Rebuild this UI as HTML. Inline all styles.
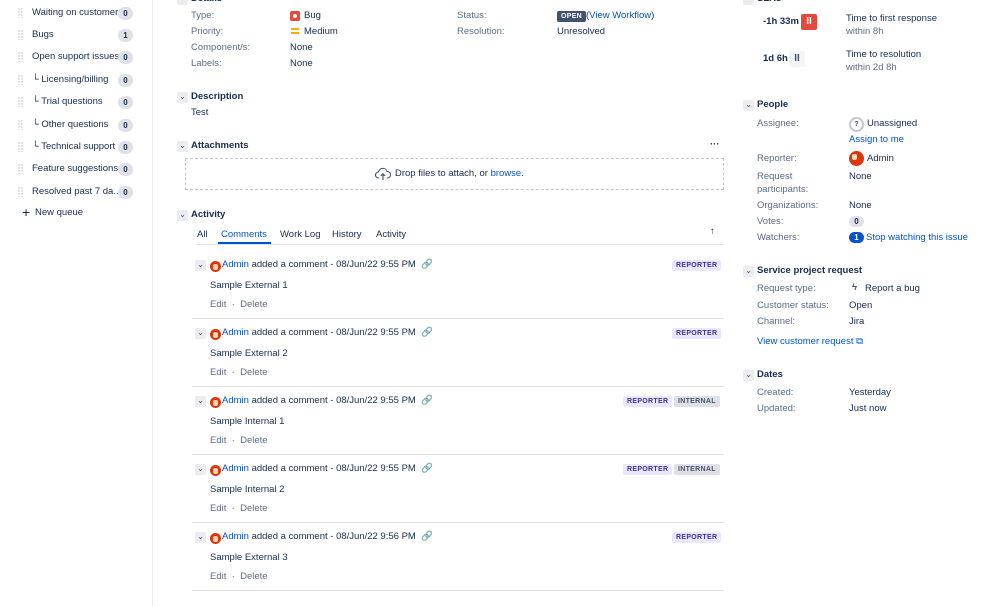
<!DOCTYPE html><html><head><style>
*{margin:0;padding:0;box-sizing:border-box}
body{width:999px;height:604px;background:#fff;font-family:"Liberation Sans",sans-serif;font-size:9.5px;color:#172b4d;position:relative;overflow:hidden}
#w{position:absolute;left:0;top:1px;width:999px;height:604px}
.a{position:absolute;white-space:nowrap;line-height:14px}
.l{color:#5e6c84}
.b{font-weight:bold}
.lk{color:#0052cc}
.badge{position:absolute;background:#dfe1e6;border-radius:7px;font-size:8px;font-weight:bold;width:15px;height:13px;text-align:center;line-height:13px;color:#172b4d}
.dr{position:absolute;left:18px;width:5px;height:10px}
.chev{position:absolute;width:11px;height:11px;background:#ebecf0;border-radius:2px;font-size:8px;text-align:center;line-height:10px;color:#42526e}
.lz{position:absolute;font-size:7px;font-weight:bold;padding:0 4px;height:11px;line-height:11px;border-radius:2px;letter-spacing:.3px}
.rep{background:#eae6ff;color:#403294}
.int{background:#dfe1e6;color:#42526e}
.av{position:absolute;width:11px;height:11px;border-radius:50%;background:#de350b;overflow:hidden}
.av:after{content:"";position:absolute;left:3px;top:3px;width:5px;height:6px;background:#ffd7b5;border-radius:2px}
.sep{position:absolute;left:192px;width:532px;height:1px;background:#dfe1e6}
</style></head><body><div id="w">
<svg width="0" height="0" style="position:absolute"><defs><pattern id="dp" width="3" height="3" patternUnits="userSpaceOnUse"><circle cx="1" cy="1" r="0.7" fill="#b3bac5"/></pattern></defs></svg>
<div style="position:absolute;left:152px;top:-1px;width:1px;height:606px;background:#ebecf0"></div>

<svg class="dr" style="top:7px"><rect width="5" height="10" fill="url(#dp)"/></svg><div class="a" style="left:32px;top:5px">Waiting on customer</div><div class="badge" style="left:118px;top:6px">0</div>
<svg class="dr" style="top:29px"><rect width="5" height="10" fill="url(#dp)"/></svg><div class="a" style="left:32px;top:27px">Bugs</div><div class="badge" style="left:118px;top:28px">1</div>
<svg class="dr" style="top:51px"><rect width="5" height="10" fill="url(#dp)"/></svg><div class="a" style="left:32px;top:49px">Open support issues</div><div class="badge" style="left:118px;top:50px">0</div>
<svg class="dr" style="top:74px"><rect width="5" height="10" fill="url(#dp)"/></svg><div class="a" style="left:32px;top:72px">└ Licensing/billing</div><div class="badge" style="left:118px;top:73px">0</div>
<svg class="dr" style="top:96px"><rect width="5" height="10" fill="url(#dp)"/></svg><div class="a" style="left:32px;top:94px">└ Trial questions</div><div class="badge" style="left:118px;top:95px">0</div>
<svg class="dr" style="top:119px"><rect width="5" height="10" fill="url(#dp)"/></svg><div class="a" style="left:32px;top:117px">└ Other questions</div><div class="badge" style="left:118px;top:118px">0</div>
<svg class="dr" style="top:141px"><rect width="5" height="10" fill="url(#dp)"/></svg><div class="a" style="left:32px;top:139px">└ Technical support</div><div class="badge" style="left:118px;top:140px">0</div>
<svg class="dr" style="top:163px"><rect width="5" height="10" fill="url(#dp)"/></svg><div class="a" style="left:32px;top:161px">Feature suggestions</div><div class="badge" style="left:118px;top:162px">0</div>
<svg class="dr" style="top:186px"><rect width="5" height="10" fill="url(#dp)"/></svg><div class="a" style="left:32px;top:184px">Resolved past 7 da...</div><div class="badge" style="left:118px;top:185px">0</div>
<div class="a" style="left:22px;top:204px;font-size:14px">+</div><div class="a" style="left:35px;top:205px">New queue</div>

<!-- details -->
<div class="chev" style="left:177px;top:-7px"></div><div class="a b" style="left:191px;top:-9px">Details</div>
<div class="a l" style="left:191px;top:8px">Type:</div><div style="position:absolute;left:290px;top:10px;width:10px;height:10px;background:#e5493a;border-radius:2px"><div style="position:absolute;left:3px;top:3px;width:4px;height:4px;background:#fff;border-radius:50%"></div></div><div class="a" style="left:304px;top:8px">Bug</div>
<div style="position:absolute;left:291px;top:27px;width:8px;height:2px;background:#ffab00"></div><div style="position:absolute;left:291px;top:31px;width:8px;height:2px;background:#ffab00"></div><div class="a" style="left:304px;top:24px">Medium</div>
<div class="a l" style="left:191px;top:24px">Priority:</div>
<div class="a l" style="left:191px;top:40px">Component/s:</div><div class="a" style="left:290px;top:40px">None</div>
<div class="a l" style="left:191px;top:56px">Labels:</div><div class="a" style="left:290px;top:56px">None</div>
<div class="a l" style="left:457px;top:8px">Status:</div><div class="lz" style="left:557px;top:10px;background:#42526e;color:#fff">OPEN</div><div class="a" style="left:586px;top:8px">(<span class="lk">View Workflow</span>)</div>
<div class="a l" style="left:457px;top:24px">Resolution:</div><div class="a" style="left:557px;top:24px">Unresolved</div>

<div class="chev" style="left:177px;top:91px">⌄</div><div class="a b" style="left:191px;top:89px">Description</div>
<div class="a" style="left:191px;top:105px">Test</div>
<div class="chev" style="left:177px;top:140px">⌄</div><div class="a b" style="left:191px;top:138px">Attachments</div><div class="a b" style="left:710px;top:137px">···</div>
<div style="position:absolute;left:185px;top:157px;width:539px;height:32px;border:1px dashed #c1c7d0"></div>
<svg style="position:absolute;left:375px;top:166px" width="16" height="14" viewBox="0 0 16 14"><path d="M4 11H3.5a3 3 0 0 1 0-6 4.5 4.5 0 0 1 8.7-.5A3 3 0 0 1 12.5 11H12M8 13V7M5.8 9L8 6.8 10.2 9" fill="none" stroke="#42526e" stroke-width="1.1"/></svg><div class="a" style="left:395px;top:166px">Drop files to attach, or <span class="lk">browse.</span></div>

<div class="chev" style="left:177px;top:209px">⌄</div><div class="a b" style="left:191px;top:207px">Activity</div>
<div class="a" style="left:197px;top:227px">All</div>
<div class="a lk" style="left:221px;top:227px">Comments</div><div style="position:absolute;left:218px;top:241px;width:53px;height:2px;background:#0052cc"></div>
<div class="a" style="left:280px;top:227px">Work Log</div>
<div class="a" style="left:332px;top:227px">History</div>
<div class="a" style="left:376px;top:227px">Activity</div>
<div class="a" style="left:710px;top:224px">↑</div>
<div style="position:absolute;left:196px;top:243px;width:528px;height:1px;background:#dfe1e6"></div>

<!-- comments -->
<div class="chev" style="left:195px;top:259px">⌄</div><div class="av" style="left:210px;top:260px"></div><div class="a" style="left:222px;top:257px"><span class="lk">Admin</span> added a comment - 08/Jun/22 9:55 PM &nbsp;🔗</div><div class="lz rep" style="left:672px;top:259px">REPORTER</div>
<div class="a" style="left:210px;top:278px">Sample External 1</div><div class="a l" style="left:210px;top:297px">Edit &nbsp;·&nbsp; Delete</div><div class="sep" style="top:317px"></div>

<div class="chev" style="left:195px;top:327px">⌄</div><div class="av" style="left:210px;top:328px"></div><div class="a" style="left:222px;top:325px"><span class="lk">Admin</span> added a comment - 08/Jun/22 9:55 PM &nbsp;🔗</div><div class="lz rep" style="left:672px;top:327px">REPORTER</div>
<div class="a" style="left:210px;top:346px">Sample External 2</div><div class="a l" style="left:210px;top:365px">Edit &nbsp;·&nbsp; Delete</div><div class="sep" style="top:385px"></div>

<div class="chev" style="left:195px;top:395px">⌄</div><div class="av" style="left:210px;top:396px"></div><div class="a" style="left:222px;top:393px"><span class="lk">Admin</span> added a comment - 08/Jun/22 9:55 PM &nbsp;🔗</div><div class="lz rep" style="left:623px;top:395px">REPORTER</div><div class="lz int" style="left:674px;top:395px">INTERNAL</div>
<div class="a" style="left:210px;top:414px">Sample Internal 1</div><div class="a l" style="left:210px;top:433px">Edit &nbsp;·&nbsp; Delete</div><div class="sep" style="top:453px"></div>

<div class="chev" style="left:195px;top:463px">⌄</div><div class="av" style="left:210px;top:464px"></div><div class="a" style="left:222px;top:461px"><span class="lk">Admin</span> added a comment - 08/Jun/22 9:55 PM &nbsp;🔗</div><div class="lz rep" style="left:623px;top:463px">REPORTER</div><div class="lz int" style="left:674px;top:463px">INTERNAL</div>
<div class="a" style="left:210px;top:482px">Sample Internal 2</div><div class="a l" style="left:210px;top:501px">Edit &nbsp;·&nbsp; Delete</div><div class="sep" style="top:521px"></div>

<div class="chev" style="left:195px;top:531px">⌄</div><div class="av" style="left:210px;top:532px"></div><div class="a" style="left:222px;top:529px"><span class="lk">Admin</span> added a comment - 08/Jun/22 9:56 PM &nbsp;🔗</div><div class="lz rep" style="left:672px;top:531px">REPORTER</div>
<div class="a" style="left:210px;top:550px">Sample External 3</div><div class="a l" style="left:210px;top:569px">Edit &nbsp;·&nbsp; Delete</div><div class="sep" style="top:589px"></div>

<!-- right column -->
<div class="chev" style="left:743px;top:-7px"></div><div class="a b" style="left:757px;top:-9px">SLAs</div>
<div class="a b" style="left:763px;top:14px">-1h 33m</div><div style="position:absolute;left:801px;top:13px;width:16px;height:16px;background:#e5493a;border-radius:2px;color:#fff;font-weight:bold;text-align:center;line-height:16px;font-size:10px">II</div>
<div class="a" style="left:846px;top:11px">Time to first response</div><div class="a l" style="left:846px;top:24px">within 8h</div>
<div class="a b" style="left:763px;top:51px">1d 6h</div><div style="position:absolute;left:789px;top:50px;width:16px;height:16px;background:#f4f5f7;border-radius:2px;color:#42526e;font-weight:bold;text-align:center;line-height:16px;font-size:10px">II</div>
<div class="a" style="left:846px;top:47px">Time to resolution</div><div class="a l" style="left:846px;top:60px">within 2d 8h</div>

<div class="chev" style="left:743px;top:99px">⌄</div><div class="a b" style="left:757px;top:97px">People</div>
<div class="a l" style="left:757px;top:116px">Assignee:</div><div style="position:absolute;left:849px;top:116px;width:15px;height:15px;border-radius:50%;background:#fff;border:2px solid #c1c7d0;font-size:7px;font-weight:bold;text-align:center;line-height:11px;color:#42526e">?</div><div class="a" style="left:867px;top:116px">Unassigned</div>
<div class="a lk" style="left:849px;top:132px">Assign to me</div>
<div class="a l" style="left:757px;top:151px">Reporter:</div><div class="av" style="left:849px;top:150px;width:15px;height:15px"></div><div class="a" style="left:867px;top:151px">Admin</div>
<div class="a l" style="left:757px;top:169px">Request</div><div class="a l" style="left:757px;top:182px">participants:</div><div class="a" style="left:849px;top:169px">None</div>
<div class="a l" style="left:757px;top:198px">Organizations:</div><div class="a" style="left:849px;top:198px">None</div>
<div class="a l" style="left:757px;top:214px">Votes:</div><div class="badge" style="left:849px;top:215px;height:11px;line-height:11px">0</div>
<div class="a l" style="left:757px;top:230px">Watchers:</div><div class="badge" style="left:849px;top:231px;background:#0052cc;color:#fff;height:11px;line-height:11px">1</div><div class="a lk" style="left:866px;top:230px">Stop watching this issue</div>

<div class="chev" style="left:743px;top:265px">⌄</div><div class="a b" style="left:757px;top:263px">Service project request</div>
<div class="a l" style="left:757px;top:281px">Request type:</div><div class="a" style="left:852px;top:280px;color:#42526e;font-weight:bold">ϟ</div><div class="a" style="left:865px;top:281px">Report a bug</div>
<div class="a l" style="left:757px;top:298px">Customer status:</div><div class="a" style="left:849px;top:298px">Open</div>
<div class="a l" style="left:757px;top:314px">Channel:</div><div class="a" style="left:849px;top:314px">Jira</div>
<div class="a lk" style="left:757px;top:334px">View customer request ⧉</div>

<div class="chev" style="left:743px;top:369px">⌄</div><div class="a b" style="left:757px;top:367px">Dates</div>
<div class="a l" style="left:757px;top:385px">Created:</div><div class="a" style="left:849px;top:385px">Yesterday</div>
<div class="a l" style="left:757px;top:401px">Updated:</div><div class="a" style="left:849px;top:401px">Just now</div>
</div></body></html>
